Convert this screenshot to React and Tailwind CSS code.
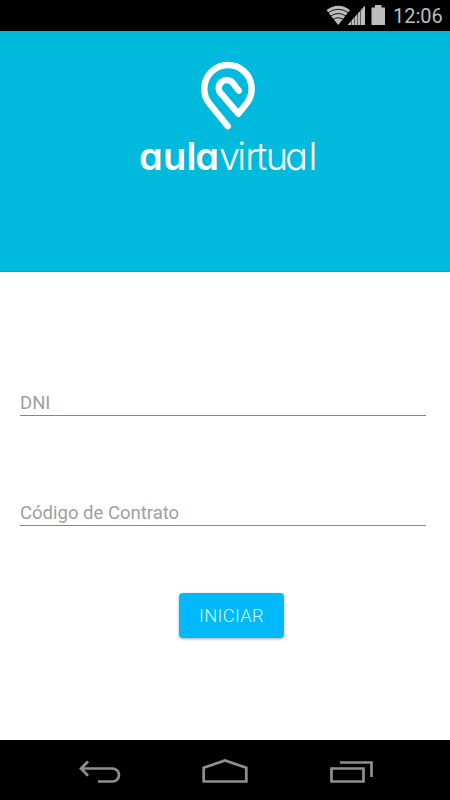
import React, { useState } from 'react';

const StatusBar = () => (
  <div className="h-[31px] bg-black flex items-start justify-end pr-[7px]">
    <svg className="w-[60px] h-[31px] mr-[6px]" viewBox="0 0 60 31" fill="#bdbdbd">
      {/* Wifi */}
      <path d="M-0.5 10 Q11.2 1.5 23 10 L11.2 25 Z" />
      <path
        d="M0.5 13.1 Q11.2 5.4 22 13.1 M3 16.4 Q11.2 10.6 19.5 16.4 M5.7 19.7 Q11.2 15.8 16.8 19.7"
        fill="none"
        stroke="#000"
        strokeWidth="0.9"
      />
      {/* Signal */}
      <path d="M20.5 25 L38 5.5 V25 Z" />
      <path d="M24.5 20.5 V25 M27.5 17.2 V25 M30.5 13.9 V25 M33.5 10.5 V25" stroke="#333" strokeWidth="0.7" />
      {/* Battery */}
      <path d="M44.5 7.5 H48 V5 H54.5 V7.5 H58 V25 H44.5 Z" />
    </svg>
    <span className="text-[20px] leading-[32px] text-[#bdbdbd] w-[50px] whitespace-nowrap">12:06</span>
  </div>
);

const Logo = () => (
  <div className="flex flex-col items-center pt-[30px] pl-[6px]">
    <svg className="w-[56px] h-[70px]" viewBox="200 61.8 56 70" fill="none">
      <path
        d="M227.8 127 L209.2 104 A23.7 23.7 0 1 1 247.5 103 L238.3 114.6 L221.8 95.2 A8 8 0 1 1 233.2 84.2 L238.8 91.4"
        stroke="#fff"
        strokeWidth="6.4"
        strokeLinecap="round"
        strokeLinejoin="round"
      />
    </svg>
    <svg className="w-[204px] h-[60px]" viewBox="126 131 204 60">
      <g fill="#fff" fontFamily="Inter, sans-serif" fontSize="38" style={{ fontFeatureSettings: '"cv11"' }}>
        <text x="139 163 186.5 195.2" y="170" fontWeight="600">aula</text>
        <text x="219 237.3 245.3 256 265.8 285 308.5" y="170" fontWeight="300">virtual</text>
      </g>
    </svg>
  </div>
);

const Field = ({ label, value, onChange }) => (
  <input
    type="text"
    placeholder={label}
    value={value}
    onChange={(e) => onChange(e.target.value)}
    className="block w-[406px] h-[28px] ml-5 pt-[2px] border-b border-[#858585] bg-transparent text-[18.5px] text-[#444] placeholder:text-[#a0a0a0] outline-none"
  />
);

const NavBar = () => (
  <div className="h-[60px] bg-black flex justify-center">
    <svg className="w-[300px] h-[60px]" viewBox="75 740 300 60" fill="none" stroke="#8f8f8f" strokeWidth="2.7">
      {/* Back */}
      <path d="M82 768.5 H112.5 A6.5 6.5 0 0 1 112.5 781.5 H98" />
      <path d="M88 761.5 L81 768.5 L88 775.7" />
      {/* Home */}
      <path d="M203.7 781.5 V767.7 L225 760.5 L246.3 767.7 V781.5 Z" />
      {/* Recents */}
      <path d="M331.5 768.5 H363.5 V781.5 H331.5 Z" />
      <path d="M340 762.5 H371.5 V777" />
    </svg>
  </div>
);

const App = () => {
  const [dni, setDni] = useState('');
  const [contrato, setContrato] = useState('');

  return (
    <div className="w-[450px] h-[800px] flex flex-col bg-white overflow-hidden font-[Roboto,sans-serif]">
      <StatusBar />
      <header className="h-[241px] bg-[#00badd] border-b border-[#00abcc]">
        <Logo />
      </header>

      <form className="flex-1 pt-[116px]" onSubmit={(e) => e.preventDefault()}>
        <Field label="DNI" value={dni} onChange={setDni} />
        <div className="mt-[82px]">
          <Field label="Código de Contrato" value={contrato} onChange={setContrato} />
        </div>
        <button
          type="submit"
          className="block w-[105px] h-[45px] mt-[67px] ml-[179px] rounded-[4px] bg-[#00b9fb] text-[18.3px] font-light tracking-[0.3px] text-[#d5fbff] shadow-[0_1px_3px_rgba(0,0,0,0.35)]"
        >
          INICIAR
        </button>
      </form>

      <NavBar />
    </div>
  );
};

export default App;
